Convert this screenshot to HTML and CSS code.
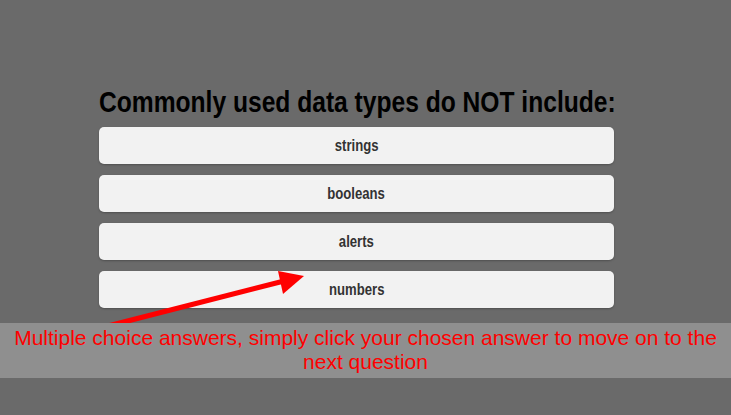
FILE: index.html
```html
<!DOCTYPE html>
<html lang="en">
<head>
<meta charset="utf-8">
<title>Quiz</title>
<link rel="stylesheet" href="styles.css">
</head>
<body>
<main class="quiz">
  <h1 class="question"><span class="narrow">Commonly used data types do NOT include:</span></h1>
  <div class="answers">
    <button class="answer"><span class="narrow">strings</span></button>
    <button class="answer"><span class="narrow">booleans</span></button>
    <button class="answer"><span class="narrow">alerts</span></button>
    <button class="answer"><span class="narrow">numbers</span></button>
  </div>
</main>
<svg class="arrow" width="731" height="415" viewBox="0 0 731 415">
  <line x1="108" y1="326" x2="288" y2="280" stroke="#ff0000" stroke-width="5"/>
  <polygon points="304,276 278,271 283,294" fill="#ff0000"/>
</svg>
<div class="hint">Multiple choice answers, simply click your chosen answer to move on to the<br>next question</div>
</body>
</html>
```
FILE: styles.css
```css
html, body {
  margin: 0;
  padding: 0;
}
body {
  background: #6a6a6a;
  width: 731px;
  height: 415px;
  overflow: hidden;
  position: relative;
  font-family: "Liberation Sans", Arial, sans-serif;
}
.narrow {
  display: inline-block;
  white-space: nowrap;
  transform: scaleX(0.82);
}
.quiz {
  width: 515px;
  margin-left: 99px;
  padding-top: 83px;
}
.question {
  margin: 0 0 7px;
  font-size: 30px;
  line-height: 37px;
  font-weight: bold;
  color: #000;
  white-space: nowrap;
}
.question .narrow {
  transform-origin: left center;
}
.answers {
  display: flex;
  flex-direction: column;
  gap: 11px;
}
.answer {
  height: 37px;
  border: none;
  border-radius: 5px;
  background: #f2f2f2;
  color: #333;
  font-family: inherit;
  font-size: 16px;
  font-weight: bold;
  padding: 0;
  box-shadow: 0 1px 2px rgba(0, 0, 0, 0.25);
}
.arrow {
  position: absolute;
  left: 0;
  top: 0;
}
.hint {
  position: absolute;
  left: 0;
  top: 323px;
  width: 731px;
  height: 55px;
  box-sizing: border-box;
  padding-top: 3px;
  background: #8f8f8f;
  color: #ff0000;
  font-size: 21px;
  line-height: 24px;
  text-align: center;
  white-space: nowrap;
}
```
